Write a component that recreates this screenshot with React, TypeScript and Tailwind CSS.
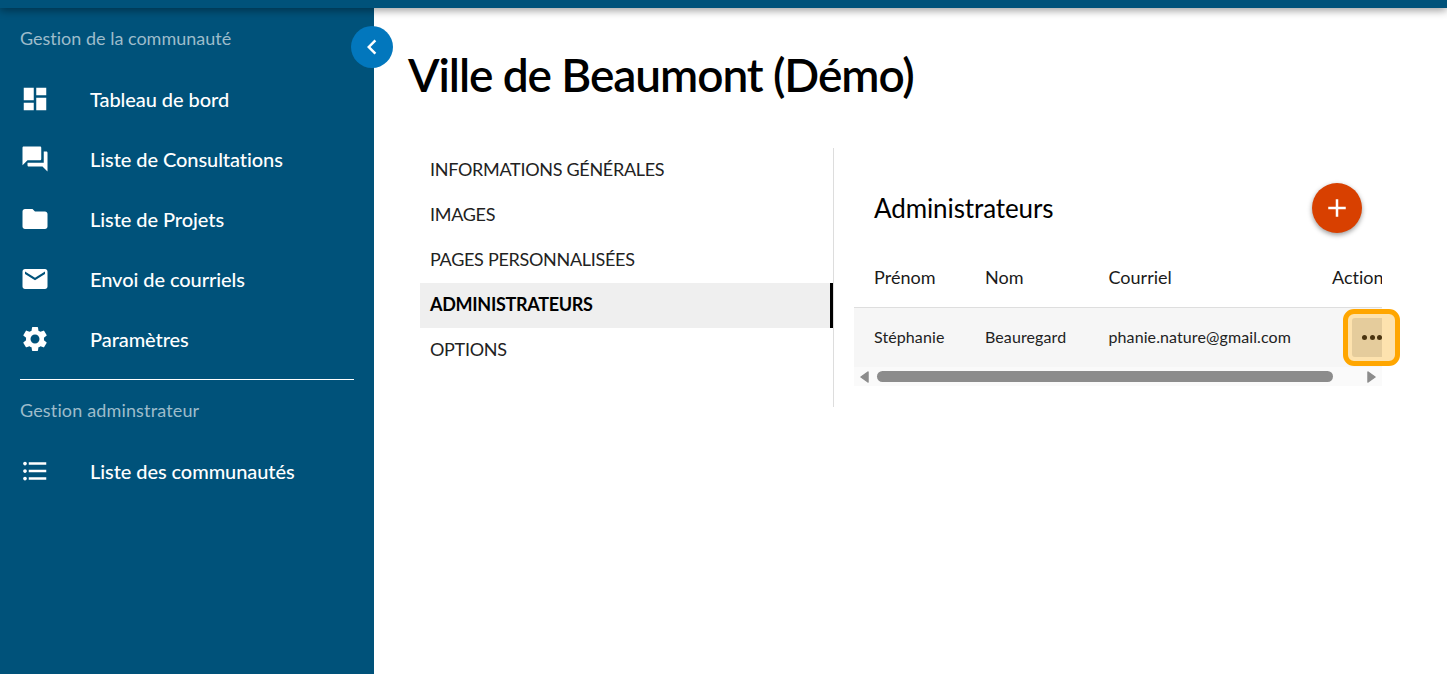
import type { ReactNode } from "react";
import { MdDashboard, MdQuestionAnswer, MdFolder, MdEmail, MdSettings, MdFormatListBulleted, MdChevronLeft, MdAdd } from "react-icons/md";

interface NavItem {
  label: string;
  icon: ReactNode;
}

const MAIN_ITEMS: NavItem[] = [
  { label: "Tableau de bord", icon: <MdDashboard size={30} /> },
  { label: "Liste de Consultations", icon: <MdQuestionAnswer size={30} /> },
  { label: "Liste de Projets", icon: <MdFolder size={30} /> },
  { label: "Envoi de courriels", icon: <MdEmail size={30} /> },
  { label: "Paramètres", icon: <MdSettings size={30} /> },
];

const TABS = ["INFORMATIONS GÉNÉRALES", "IMAGES", "PAGES PERSONNALISÉES", "ADMINISTRATEURS", "OPTIONS"];

function SideLink({ item }: { item: NavItem }) {
  return (
    <a className="flex h-[60px] items-center text-[20px] font-medium tracking-[-0.07px] text-white">
      <span className="flex w-[70px] shrink-0">{item.icon}</span>
      <span>{item.label}</span>
    </a>
  );
}

function Sidebar() {
  return (
    <aside className="relative w-[374px] shrink-0 bg-[#00527a] px-5 pt-[20px]">
      <p className="h-[41px] text-[18px] leading-[21px] text-[#9dbccb]">Gestion de la communauté</p>
      <nav>
        {MAIN_ITEMS.map((item) => (
          <SideLink key={item.label} item={item} />
        ))}
      </nav>
      <div className="mt-[10px] h-px bg-white" />
      <p className="mt-[20px] h-[41px] text-[18px] leading-[21px] tracking-[0.15px] text-[#9dbccb]">Gestion adminstrateur</p>
      <SideLink item={{ label: "Liste des communautés", icon: <MdFormatListBulleted size={30} /> }} />

      {/* collapse toggle */}
      <button className="absolute left-[351px] top-[18px] flex h-[42px] w-[42px] items-center justify-center rounded-full bg-[#0277bd] text-white">
        <MdChevronLeft size={30} />
      </button>
    </aside>
  );
}

function ScrollArrow({ points }: { points: string }) {
  return (
    <svg width="9" height="12" viewBox="0 0 9 12" className="shrink-0">
      <polygon points={points} fill="#8c8c8c" stroke="#8c8c8c" strokeWidth="1.5" strokeLinejoin="round" />
    </svg>
  );
}

function AdminTable() {
  return (
    <div className="relative mt-[15px] w-[528px]">
      <div className="w-[528px] overflow-hidden">
        <div className="flex h-[59px] w-[560px] items-center text-[18px] text-[#1a1a1a]">
          <span className="w-[131px] pl-5 tracking-[0.05px]">Prénom</span>
          <span className="w-[123.5px]">Nom</span>
          <span className="w-[223.5px]">Courriel</span>
          <span>Actions</span>
        </div>
        <div className="h-px bg-[#dedede]" />
        <div className="flex h-[59px] items-center bg-[#f6f6f6] pb-[2px] text-[16px] tracking-[0.1px] text-[#222222]">
          <span className="w-[131px] pl-5">Stéphanie</span>
          <span className="w-[123.5px]">Beauregard</span>
          <span className="w-[223.5px]">phanie.nature@gmail.com</span>
        </div>
        <div className="flex h-[19px] items-center bg-[#fafafa]">
          <span className="ml-[6px] flex">
            <ScrollArrow points="8,1 1,6 8,11" />
          </span>
          <span className="ml-[8px] h-[11px] w-[456px] rounded-full bg-[#8c8c8c]" />
          <span className="ml-[34px] flex">
            <ScrollArrow points="1,1 8,6 1,11" />
          </span>
        </div>
      </div>

      {/* focused action button, cut by the table's edge */}
      <div className="absolute left-[489px] top-[61px] h-[57px] w-[57px] rounded-[11px] border-[5px] border-[#ffa600] bg-[#fde2ae]">
        <div className="ml-[4px] mt-[4px] flex h-[39px] w-[30px] items-center overflow-hidden rounded-l-[3px] bg-[#e5cc9c] pl-[10px]">
          <span className="flex shrink-0 gap-[2.5px]">
            <i className="h-[5px] w-[5px] rounded-full bg-[#4a3410]" />
            <i className="h-[5px] w-[5px] rounded-full bg-[#4a3410]" />
            <i className="h-[5px] w-[5px] rounded-full bg-[#4a3410]" />
          </span>
        </div>
      </div>
    </div>
  );
}

export default function App() {
  return (
    <div className="flex h-screen flex-col overflow-hidden bg-white font-['Lato','Noto_Sans',sans-serif] [font-variant-ligatures:none]">
      <div className="relative z-10 h-2 shrink-0 bg-[#00527a] shadow-[0_2px_8px_rgba(0,0,0,0.45)]" />
      <div className="flex flex-1">
        <Sidebar />
        <main className="flex-1 pl-[34px] pt-[35px]">
          <h1 className="text-[46px] font-semibold leading-[64px] tracking-[-1.07px] text-black">Ville de Beaumont (Démo)</h1>
          <div className="ml-3 mt-[41px] flex">
            <ul className="w-[414px] border-r border-[#dddddd] text-[18px] tracking-[-0.3px] text-[#222222]">
              {TABS.map((tab) => (
                <li
                  key={tab}
                  className={
                    tab === "ADMINISTRATEURS"
                      ? "flex h-[45px] items-center border-r-[3px] border-black bg-[#efefef] pb-[2px] pl-2.5 font-bold text-black"
                      : "flex h-[45px] items-center pb-[2px] pl-2.5"
                  }
                >
                  {tab}
                </li>
              ))}
            </ul>
            <section className="ml-5 h-[259px] pt-[35px]">
              <div className="flex h-[50px] w-[508px] items-center justify-between pl-5">
                <h2 className="text-[26px] tracking-[-0.1px] text-black">Administrateurs</h2>
                <button className="flex h-[50px] w-[50px] items-center justify-center rounded-full bg-[#d84000] text-white shadow-[0_2px_5px_rgba(0,0,0,0.4)]">
                  <MdAdd size={30} />
                </button>
              </div>
              <AdminTable />
            </section>
          </div>
        </main>
      </div>
    </div>
  );
}
